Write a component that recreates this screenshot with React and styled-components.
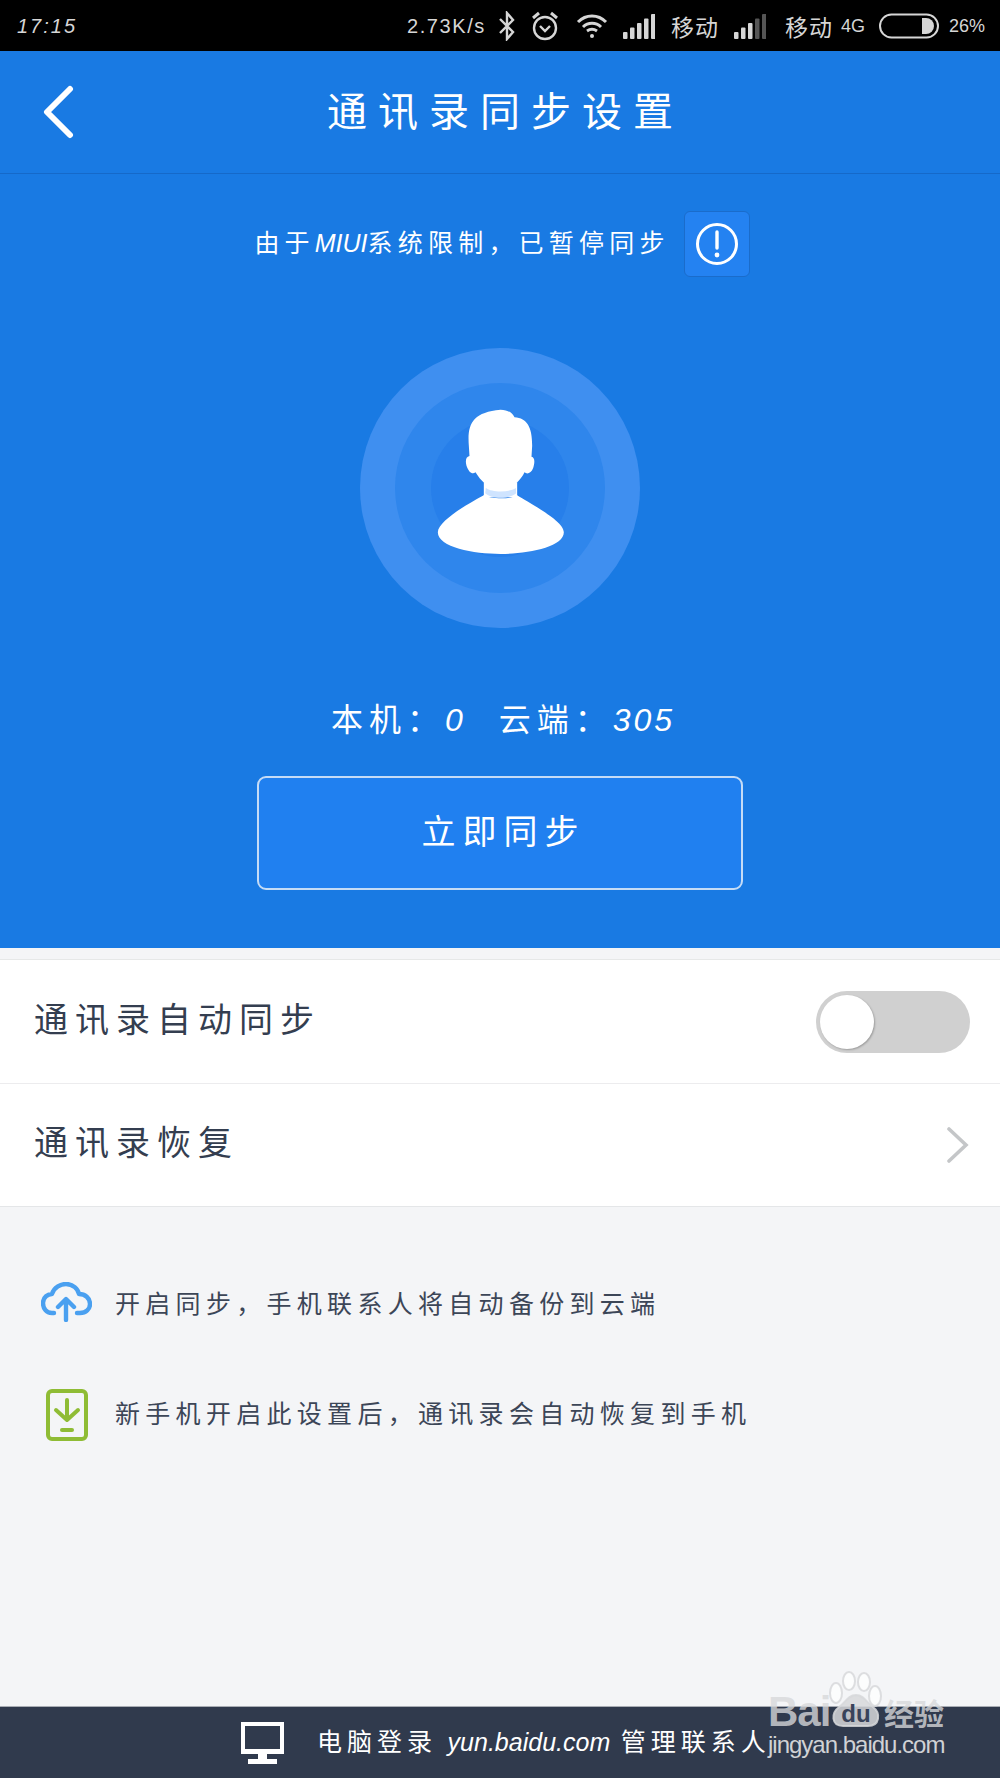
import React from 'react';
import styled, { createGlobalStyle } from 'styled-components';

const GlobalStyle = createGlobalStyle`
  * { box-sizing: border-box; }
  html, body { margin: 0; padding: 0; }
  body {
    background: #f4f5f7;
    font-family: "Noto Sans CJK SC", "Noto Sans", sans-serif;
  }
`;

const Page = styled.div`
  position: relative;
  width: 1000px;
  height: 1778px;
  display: flex;
  flex-direction: column;
  overflow: hidden;
  background: #f4f5f7;
`;

const StatusBar = styled.div`
  height: 51px;
  flex: none;
  background: #000;
  color: #d6d6d6;
  display: flex;
  align-items: center;
  padding: 0 15px 0 17px;
  font-size: 20px;
  line-height: 24px;
`;

const Clock = styled.span`
  font-family: "Liberation Sans", sans-serif;
  font-style: italic;
  letter-spacing: 2px;
  margin-right: auto;
`;

const StatusText = styled.span`
  font-family: ${p => (p.$cjk ? '"Noto Sans CJK SC"' : '"Liberation Sans"')}, sans-serif;
  font-size: ${p => p.$size || 20}px;
  letter-spacing: ${p => p.$spacing || 0}px;
  margin-left: ${p => p.$left || 0}px;
  white-space: nowrap;
`;

const StatusIcon = styled.svg`
  display: block;
  flex: none;
  margin-left: ${p => p.$left || 0}px;
`;

const Hero = styled.section`
  height: 897px;
  flex: none;
  background: #197ae3;
  display: flex;
  flex-direction: column;
  align-items: center;
  color: #fff;
`;

const Header = styled.header`
  position: relative;
  width: 100%;
  height: 123px;
  flex: none;
  display: flex;
  align-items: center;
  justify-content: center;
  border-bottom: 1px solid #1569c9;
`;

const BackIcon = styled.svg`
  position: absolute;
  left: 41px;
  top: 34px;
`;

const Title = styled.h1`
  margin: 0 0 6px;
  font-size: 40px;
  font-weight: 400;
  letter-spacing: 11px;
  line-height: 50px;
  padding-left: 11px;
`;

const Notice = styled.div`
  margin-top: 37px;
  height: 66px;
  display: flex;
  align-items: center;
  padding-left: 4px;
  font-size: 25px;
  letter-spacing: 5.2px;
`;

const NoticeText = styled.span`
  margin-bottom: 6px;
  white-space: nowrap;
`;

const Latin = styled.span`
  font-family: "Liberation Sans", sans-serif;
  font-style: italic;
  letter-spacing: ${p => p.$spacing || 0}px;
`;

const InfoButton = styled.button`
  width: 66px;
  height: 66px;
  margin-left: 14px;
  padding: 0;
  border: 1px solid #1a6ccb;
  border-radius: 6px;
  background: #2482f1;
  display: flex;
  align-items: center;
  justify-content: center;
`;

const Ring = styled.div`
  width: ${p => p.$size}px;
  height: ${p => p.$size}px;
  border-radius: 50%;
  background: ${p => p.$color};
  display: flex;
  align-items: center;
  justify-content: center;
  flex: none;
`;

const AvatarWrap = styled.div`
  margin-top: 71px;
`;

const PersonIcon = styled.svg`
  display: block;
  flex: none;
  margin-bottom: 14px;
`;

const Counts = styled.div`
  margin-top: 66px;
  height: 48px;
  display: flex;
  align-items: center;
  gap: 36px;
  padding-left: 6px;
  font-size: 32px;
  letter-spacing: 6px;
  line-height: 48px;
`;

const SyncButton = styled.button`
  width: 486px;
  height: 114px;
  margin-top: 34px;
  padding: 0 0 8px 7px;
  flex: none;
  border: 2px solid #c5dcf6;
  border-radius: 9px;
  background: #2080f0;
  color: #fff;
  font-family: inherit;
  font-size: 34px;
  letter-spacing: 7px;
`;

const SettingsList = styled.div`
  margin-top: 11px;
  flex: none;
  background: #fff;
  border-top: 1px solid #e6e8e8;
  border-bottom: 1px solid #e4e6e8;
`;

const SettingRow = styled.div`
  height: 123px;
  display: flex;
  align-items: center;
  justify-content: space-between;
  padding: 0 31px 0 34px;
  & + & { border-top: 1px solid #ececee; }
`;

const RowLabel = styled.span`
  color: #343e50;
  font-size: 34px;
  letter-spacing: 7px;
  margin-bottom: 9px;
`;

const Toggle = styled.div`
  width: 154px;
  height: 62px;
  margin-right: -1px;
  border-radius: 31px;
  background: #d0d0d0;
  display: flex;
  align-items: center;
  padding-left: 4px;
`;

const Knob = styled.div`
  width: 54px;
  height: 54px;
  border-radius: 50%;
  background: #fff;
  box-shadow: 1px 1px 2px rgba(0, 0, 0, 0.25);
`;

const Tips = styled.div`
  margin-top: 68px;
  display: flex;
  flex-direction: column;
  gap: 57px;
  padding-left: 41px;
`;

const Tip = styled.div`
  height: 53px;
  display: flex;
  align-items: center;
  color: #3c4657;
  font-size: 25px;
  letter-spacing: 5.3px;
`;

const TipIcon = styled.div`
  width: 74px;
  flex: none;
  display: flex;
  padding-left: ${p => p.$indent || 0}px;
  padding-top: ${p => p.$drop || 0}px;
`;

const Footer = styled.footer`
  margin-top: auto;
  height: 72px;
  flex: none;
  background: #303a4d;
  border-top: 1px solid #a9adb4;
  color: #fff;
  display: flex;
  align-items: center;
  padding-left: 241px;
  font-size: 25px;
  letter-spacing: 5px;
`;

const FooterText = styled.span`
  margin: 0 0 6px 33px;
  white-space: nowrap;
`;

const Watermark = styled.div`
  position: absolute;
  left: 768px;
  top: 1671px;
  width: 180px;
  color: rgba(215, 216, 218, 0.8);
  font-family: "Liberation Sans", sans-serif;
`;

const LogoRow = styled.div`
  display: flex;
  align-items: flex-end;
  height: 56px;
`;

const BaiText = styled.span`
  width: 60px;
  flex: none;
  font-size: 42px;
  font-weight: 700;
  line-height: 30px;
  letter-spacing: -1px;
`;

const Paw = styled.div`
  position: relative;
  width: 54px;
  height: 56px;
  flex: none;
`;

const DuText = styled.span`
  position: absolute;
  left: 11px;
  bottom: 3px;
  width: 34px;
  text-align: center;
  font-size: 24px;
  font-weight: 700;
  line-height: 20px;
  color: #39435a;
`;

const JingYan = styled.span`
  margin-left: 2px;
  font-family: "Noto Sans CJK SC", sans-serif;
  font-size: 30px;
  font-weight: 700;
  line-height: 30px;
  white-space: nowrap;
`;

const WatermarkUrl = styled.div`
  margin-top: 3px;
  font-size: 24px;
  line-height: 30px;
  letter-spacing: -1px;
  color: #d0d2d5;
  white-space: nowrap;
`;

const SignalIcon = ({ left, dim }) => (
  <StatusIcon $left={left} width="32" height="26" viewBox="0 0 32 26">
    {[0, 1, 2, 3, 4].map(i => (
      <rect
        key={i}
        x={i * 7}
        y={19 - i * 4.5}
        width="4.5"
        height={7 + i * 4.5}
        rx="1"
        fill={dim && i > 2 ? '#555' : '#d6d6d6'}
      />
    ))}
  </StatusIcon>
);

const App = () => (
  <Page>
    <GlobalStyle />
    <StatusBar>
      <Clock>17:15</Clock>
      <StatusText $spacing={1.6}>2.73K/s</StatusText>
      <StatusIcon $left={12} width="18" height="30" viewBox="0 0 18 30" fill="none" stroke="#d6d6d6" strokeWidth="2.4">
        <path d="M2 8 L15 21 L9 28 V2 L15 9 L2 22" />
      </StatusIcon>
      <StatusIcon $left={15} width="28" height="32" viewBox="0 0 28 32" fill="none" stroke="#d6d6d6" strokeWidth="2.4">
        <circle cx="14" cy="18" r="11" />
        <path d="M9 16 L14 21 L19 16" />
        <path d="M2 8 L8 3 M26 8 L20 3" strokeWidth="3" />
      </StatusIcon>
      <StatusIcon $left={17} width="32" height="26" viewBox="0 0 32 26" fill="none" stroke="#d6d6d6" strokeWidth="3">
        <path d="M2 9 C10 1 22 1 30 9" />
        <path d="M7 14 C12 9 20 9 25 14" />
        <path d="M11 18 C14 16 18 16 21 18" />
        <circle cx="16" cy="23" r="2" fill="#d6d6d6" stroke="none" />
      </StatusIcon>
      <SignalIcon left={15} />
      <StatusText $cjk $size={23} $spacing={1} $left={16}>移动</StatusText>
      <SignalIcon left={15} dim />
      <StatusText $cjk $size={23} $spacing={1} $left={19}>移动</StatusText>
      <StatusText $size={18} $left={8}>4G</StatusText>
      <StatusIcon $left={14} width="60" height="26" viewBox="0 0 60 26">
        <rect x="1" y="1.5" width="58" height="23" rx="11.5" fill="none" stroke="#d6d6d6" strokeWidth="2" />
        <path d="M43 5 H47 A8 8 0 0 1 47 21 H43 Z" fill="#d6d6d6" />
      </StatusIcon>
      <StatusText $size={18} $left={10}>26%</StatusText>
    </StatusBar>

    <Hero>
      <Header>
        <BackIcon width="34" height="54" viewBox="0 0 34 54" fill="none" stroke="#fff" strokeWidth="6" strokeLinecap="round" strokeLinejoin="round">
          <path d="M29 4 L6 27 L29 50" />
        </BackIcon>
        <Title>通讯录同步设置</Title>
      </Header>

      <Notice>
        <NoticeText>由于<Latin>MIUI</Latin>系统限制，已暂停同步</NoticeText>
        <InfoButton aria-label="info">
          <svg width="44" height="44" viewBox="0 0 44 44" fill="none">
            <circle cx="22" cy="22" r="19.5" stroke="#fff" strokeWidth="3" />
            <path d="M22 10 V26" stroke="#fff" strokeWidth="3.4" strokeLinecap="round" />
            <circle cx="22" cy="33" r="2.4" fill="#fff" />
          </svg>
        </InfoButton>
      </Notice>

      <AvatarWrap>
        <Ring $size={280} $color="#3f8ff0">
          <Ring $size={210} $color="#2f86ec">
            <Ring $size={138} $color="#277fea">
              <PersonIcon width="127" height="145" viewBox="290 235 380 435">
                <path d="M430 455 H530 V500 H430 Z" fill="#fff" />
                <path d="M385 345 C380 280 395 245 480 237 C500 237 515 245 522 260 C560 262 575 290 575 345 L573 378 C585 380 582 400 578 412 C572 428 560 432 552 425 C540 450 515 476 480 478 C445 476 420 450 405 425 C395 432 385 425 378 405 C374 390 376 378 387 376 Z" fill="#fff" />
                <path d="M432 492 C445 506 515 506 530 494 C570 520 670 570 670 605 C670 650 560 670 480 670 C400 670 292 650 292 605 C292 570 390 515 432 492 Z" fill="#fff" />
                <path d="M436 472 C455 486 505 486 526 472 L527 488 C505 506 455 506 434 488 Z" fill="#cfe4ff" />
              </PersonIcon>
            </Ring>
          </Ring>
        </Ring>
      </AvatarWrap>

      <Counts>
        <span>本机：<Latin>0</Latin></span>
        <span>云端：<Latin $spacing={3}>305</Latin></span>
      </Counts>

      <SyncButton>立即同步</SyncButton>
    </Hero>

    <SettingsList>
      <SettingRow>
        <RowLabel>通讯录自动同步</RowLabel>
        <Toggle><Knob /></Toggle>
      </SettingRow>
      <SettingRow>
        <RowLabel>通讯录恢复</RowLabel>
        <svg width="22" height="36" viewBox="0 0 22 36" fill="none" stroke="#c4c6c8" strokeWidth="3.6" strokeLinecap="round">
          <path d="M2 2 L19 18 L2 34" />
        </svg>
      </SettingRow>
    </SettingsList>

    <Tips>
      <Tip>
        <TipIcon>
          <svg width="51" height="40" viewBox="0 0 51 40" fill="none" stroke="#4aa0f0" strokeWidth="4.4" strokeLinecap="round" strokeLinejoin="round">
            <path d="M13 31 H11 C5 31 2 26 2 21 C2 15 7 12 11 12 C13 5 20 2 25 2 C32 2 37 7 38 12 C44 12 49 16 49 22 C49 27 45 31 39 31 H36" />
            <path d="M25 38 V18 M17 25 L25 17 L33 25" />
          </svg>
        </TipIcon>
        开启同步，手机联系人将自动备份到云端
      </Tip>
      <Tip>
        <TipIcon $indent={5} $drop={7}>
          <svg width="42" height="52" viewBox="0 0 42 52" fill="none" stroke="#8fbc35" strokeWidth="4" strokeLinecap="round" strokeLinejoin="round">
            <rect x="2" y="2" width="38" height="48" rx="4" />
            <path d="M21 11 V30 M10 21 L21 31 L32 21" />
            <path d="M16 41 H26" />
          </svg>
        </TipIcon>
        新手机开启此设置后，通讯录会自动恢复到手机
      </Tip>
    </Tips>

    <Footer>
      <svg width="43" height="42" viewBox="0 0 43 42" fill="#fff">
        <path fillRule="evenodd" d="M0 0 H43 V32 H0 Z M4 4 V27 H39 V4 Z" />
        <rect x="17" y="32" width="9" height="5" />
        <rect x="7" y="37" width="29" height="5" />
      </svg>
      <FooterText>
        电脑登录 <Latin>yun.baidu.com</Latin> 管理联系人
      </FooterText>
    </Footer>

    <Watermark>
      <LogoRow>
        <BaiText>Bai</BaiText>
        <Paw>
          <svg width="54" height="56" viewBox="0 0 54 56" fill="rgba(255,255,255,0.75)" stroke="rgba(215,216,218,0.85)" strokeWidth="2">
            <ellipse cx="8" cy="22" rx="6" ry="10" />
            <ellipse cx="21" cy="10" rx="6" ry="9" />
            <ellipse cx="36" cy="11" rx="6" ry="9" />
            <ellipse cx="47" cy="25" rx="6" ry="10" />
            <path d="M28 24 C36 24 39 32 45 36 C53 42 52 55 40 55 H15 C3 55 3 42 11 36 C17 32 20 24 28 24 Z" fill="rgba(215,216,218,0.85)" />
          </svg>
          <DuText>du</DuText>
        </Paw>
        <JingYan>经验</JingYan>
      </LogoRow>
      <WatermarkUrl>jingyan.baidu.com</WatermarkUrl>
    </Watermark>
  </Page>
);

export default App;
